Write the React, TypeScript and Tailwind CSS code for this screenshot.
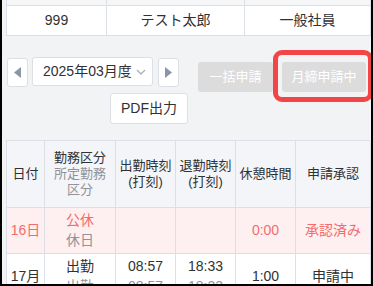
import React from 'react';

const font = { fontFamily: '"Liberation Sans", "Noto Sans CJK JP", sans-serif' };

function Cell({ children, className = '' }: { children?: React.ReactNode; className?: string }) {
  return (
    <div className={`flex flex-col items-center justify-center border-r border-b border-[#dcdfe6] text-center ${className}`}>
      {children}
    </div>
  );
}

function ArrowButton({ dir }: { dir: 'left' | 'right' }) {
  return (
    <button className="flex h-[29px] w-[21px] items-center justify-center rounded-[3px] border border-[#dcdfe6] bg-white">
      <svg width="7" height="11" viewBox="0 0 7 11">
        {dir === 'left' ? <path d="M7 0 L0 5.5 L7 11 Z" fill="#8a95a5" /> : <path d="M0 0 L7 5.5 L0 11 Z" fill="#8a95a5" />}
      </svg>
    </button>
  );
}

export default function App() {
  return (
    <div style={font} className="relative h-[286px] w-[373px] overflow-hidden border-x-2 border-b-2 border-black bg-[#f2f3f5] text-[#303133]">
      <div className="pl-1 pr-px">
        {/* staff table */}
        <div className="grid grid-cols-[100px_138px_126px] border-l border-[#dcdfe6] text-[14px]">
          <Cell className="h-[6px] bg-[#f5f6f8]" />
          <Cell className="h-[6px] bg-[#f5f6f8]" />
          <Cell className="h-[6px] bg-[#f5f6f8]" />
          <Cell className="h-[30px] bg-white">999</Cell>
          <Cell className="h-[30px] bg-white">テスト太郎</Cell>
          <Cell className="h-[30px] bg-white">一般社員</Cell>
        </div>

        {/* month navigation */}
        <div className="flex">
          <div className="mt-[21px] flex w-[182px] flex-col">
            <div className="flex items-start">
              <div className="ml-px mt-px">
                <ArrowButton dir="left" />
              </div>
              <button className="ml-[4px] flex h-[29px] w-[121px] items-center rounded-[3px] border border-[#dcdfe6] bg-white pl-[10px] pr-[6px] text-[14px]">
                <span className="flex-1 text-left">2025年03月度</span>
                <svg width="10" height="6" viewBox="0 0 10 6" fill="none">
                  <path d="M1 1 L5 5 L9 1" stroke="#a8b0bc" strokeWidth="1.3" />
                </svg>
              </button>
              <div className="ml-[5px] mt-px">
                <ArrowButton dir="right" />
              </div>
            </div>
            <div className="mt-[6px] flex justify-end">
              <button className="h-[31px] w-[78px] rounded-[3px] border border-[#dcdfe6] bg-white text-[14px]">PDF出力</button>
            </div>
          </div>
          <div className="ml-[10px] mt-[26px] flex gap-[9px]">
            <button className="h-[30px] w-[75px] rounded-[3px] bg-[#dcdcdc] text-[13px] text-white">一括申請</button>
            <button className="h-[30px] w-[84px] rounded-[3px] bg-[#dcdcdc] text-[13px] text-white">月締申請中</button>
          </div>
        </div>

        {/* attendance table */}
        <div className="mt-4 grid grid-cols-[38px_71px_60px_60px_60px_75px] border-t border-l border-[#dcdfe6]">
          <Cell className="h-[67px] bg-[#f3f5f8] text-[13px] leading-4">日付</Cell>
          <Cell className="bg-[#f3f5f8] text-[13px] leading-4">
            <span>勤務区分</span>
            <span className="px-1 text-[#909399]">所定勤務区分</span>
          </Cell>
          <Cell className="bg-[#f3f5f8] text-[13px] leading-4">
            <span>出勤時刻</span>
            <span>(打刻)</span>
          </Cell>
          <Cell className="bg-[#f3f5f8] text-[13px] leading-4">
            <span>退勤時刻</span>
            <span>(打刻)</span>
          </Cell>
          <Cell className="bg-[#f3f5f8] text-[13px] leading-4">休憩時間</Cell>
          <Cell className="bg-[#f3f5f8] text-[13px] leading-4">申請承認</Cell>

          <Cell className="h-[46px] bg-[#fef0f0] text-[14px] text-[#f56c6c]">16日</Cell>
          <Cell className="bg-[#fef0f0] text-[14px] leading-[19.5px]">
            <span className="text-[#f56c6c]">公休</span>
            <span className="text-[#909399]">休日</span>
          </Cell>
          <Cell className="bg-[#fef0f0]" />
          <Cell className="bg-[#fef0f0]" />
          <Cell className="bg-[#fef0f0] text-[14px] text-[#f56c6c]">0:00</Cell>
          <Cell className="bg-[#fef0f0] text-[14px] text-[#f56c6c]">承認済み</Cell>

          <Cell className="h-[46px] bg-white text-[14px]">17月</Cell>
          <Cell className="bg-white text-[14px] leading-[19.5px]">
            <span>出勤</span>
            <span className="text-[#909399]">出勤</span>
          </Cell>
          <Cell className="bg-white text-[14px] leading-[19.5px]">
            <span>08:57</span>
            <span className="text-[#909399]">08:57</span>
          </Cell>
          <Cell className="bg-white text-[14px] leading-[19.5px]">
            <span>18:33</span>
            <span className="text-[#909399]">18:33</span>
          </Cell>
          <Cell className="bg-white text-[14px]">1:00</Cell>
          <Cell className="bg-white text-[14px]">申請中</Cell>
        </div>
      </div>

      {/* highlight annotation */}
      <div className="absolute left-[271px] top-[50px] h-[52px] w-[100px] rounded-[9px] border-[5px] border-[#f34448]" />
    </div>
  );
}
